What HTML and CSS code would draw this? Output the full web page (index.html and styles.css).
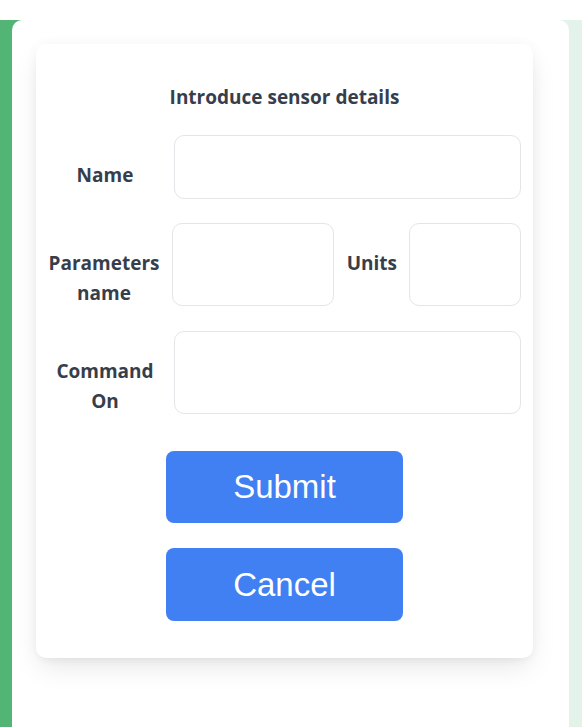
FILE: index.html
```html
<!DOCTYPE html>
<html lang="en">
<head>
<meta charset="utf-8">
<title>Introduce sensor details</title>
<link rel="stylesheet" href="styles.css">
</head>
<body>
<div class="shell">
  <main class="panel">
    <form class="card">
      <h2 class="title">Introduce sensor details</h2>
      <div class="row row-name">
        <label class="label label-wide">Name</label>
        <input class="field field-short" type="text">
      </div>
      <div class="row row-params">
        <label class="label label-params">Parameters name</label>
        <input class="field field-tall field-grow" type="text">
        <label class="label label-units">Units</label>
        <input class="field field-tall field-units" type="text">
      </div>
      <div class="row row-command">
        <label class="label label-wide">Command On</label>
        <input class="field field-tall field-grow" type="text">
      </div>
      <div class="actions">
        <button type="button" class="btn btn-submit">Submit</button>
        <button type="button" class="btn">Cancel</button>
      </div>
    </form>
  </main>
</div>
</body>
</html>
```
FILE: styles.css
```css
* { box-sizing: border-box; }
html, body { margin: 0; padding: 0; background: #ffffff; }
body {
  font-family: "Open Sans", "Noto Sans", sans-serif;
  color: #363e4c;
  height: 727px;
  overflow: hidden;
}
.shell {
  margin-top: 20px;
  height: 707px;
  background: linear-gradient(to right, #52b576 0, #52b576 50%, #e3f3ea 50%, #e3f3ea 100%);
  padding-left: 12px;
}
.panel {
  width: 557px;
  height: 707px;
  background: #ffffff;
  border-radius: 10px 10px 0 0;
  padding: 24px 0 0 24px;
}
.card {
  width: 497px;
  height: 614px;
  background: #ffffff;
  border-radius: 10px;
  box-shadow: 0 12px 28px -4px rgba(0,0,0,0.10), 0 4px 10px -4px rgba(0,0,0,0.06), 0 0 14px rgba(0,0,0,0.03);
  padding: 41px 12px 0 12px;
  display: flex;
  flex-direction: column;
}
.title {
  margin: 0;
  font-size: 19px;
  line-height: 24px;
  font-weight: 700;
  text-align: center;
}
.row {
  display: flex;
  align-items: flex-start;
  gap: 12px;
}
.row-name { margin-top: 26px; }
.row-params { margin-top: 24px; }
.row-command { margin-top: 23px; }
.label {
  font-size: 19px;
  line-height: 30px;
  font-weight: 700;
  text-align: center;
  margin-top: 25px;
}
.label-wide { width: 114px; flex: none; }
.label-params { width: 112px; flex: none; }
.label-units { margin-left: 1px; flex: none; }
.field {
  border: 1px solid #e3e5e8;
  border-radius: 10px;
  background: #ffffff;
  outline: none;
  font: inherit;
}
.field-short { height: 64px; flex: 1; min-width: 0; }
.field-tall { height: 83px; }
.field-grow { flex: 1; min-width: 0; }
.field-units { width: 112px; flex: none; }
.actions {
  margin-top: 35px;
  display: flex;
  flex-direction: column;
  align-items: center;
  gap: 25px;
}
.btn {
  width: 237px;
  height: 73px;
  border: none;
  border-radius: 8px;
  background: #4080f2;
  color: #ffffff;
  font-family: "Liberation Sans", Arial, sans-serif;
  font-size: 33px;
  cursor: pointer;
}
.btn-submit { height: 72px; }
```
